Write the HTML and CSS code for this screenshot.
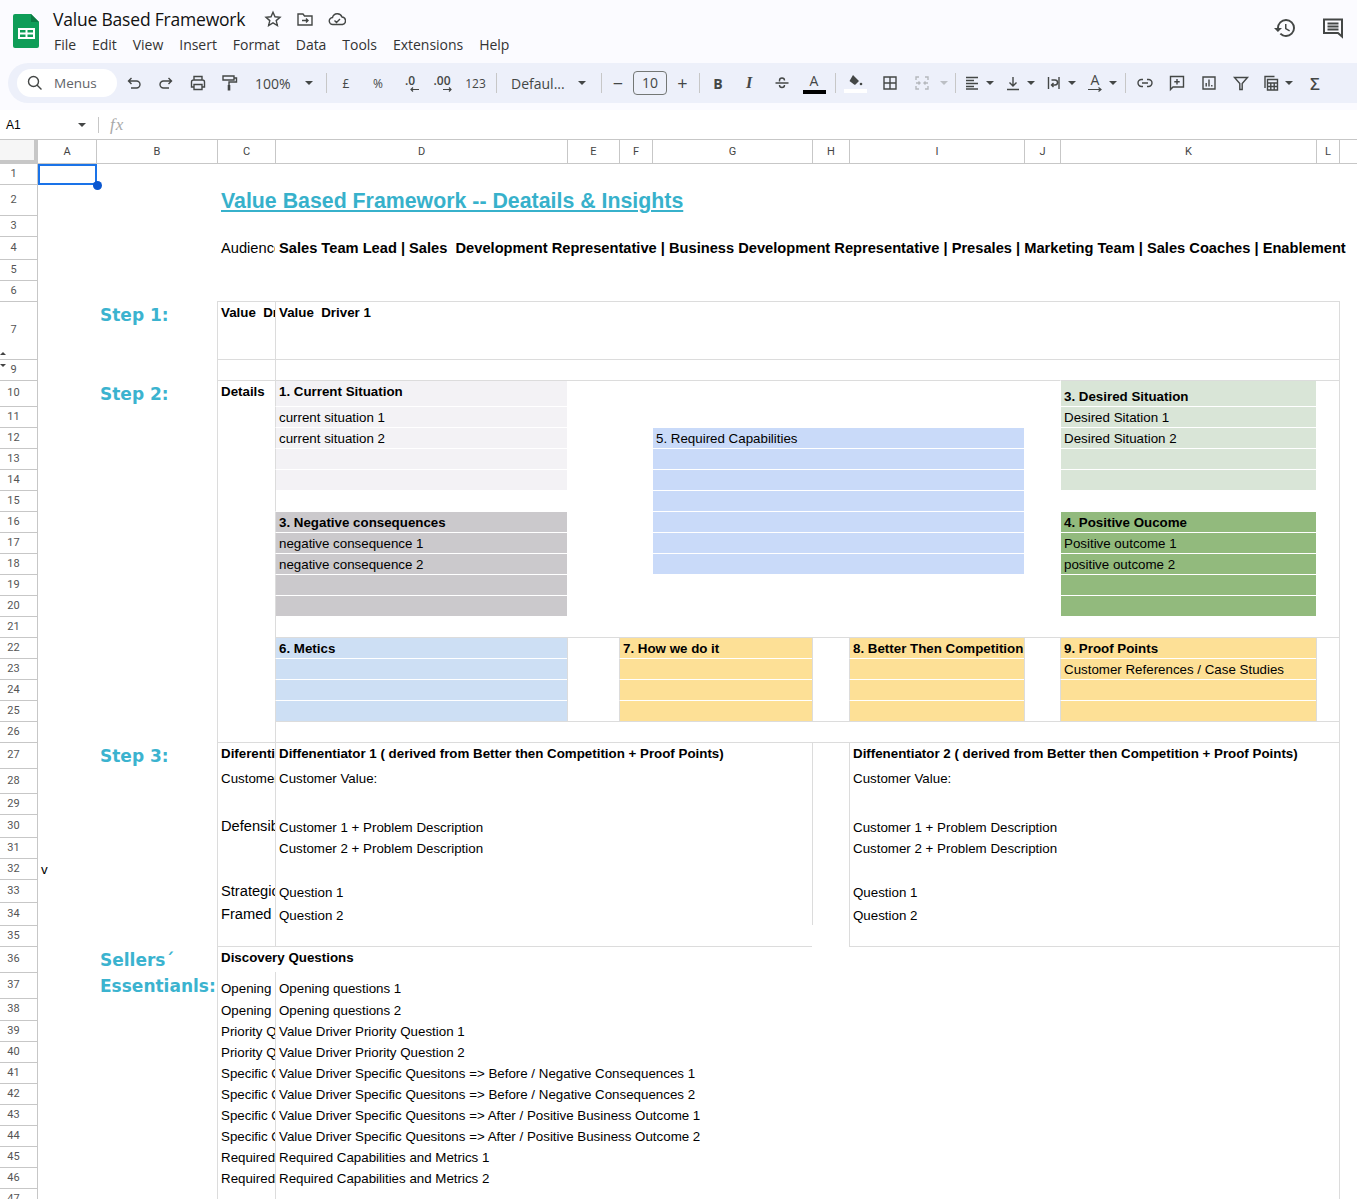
FILE: index.html
```html
<!DOCTYPE html>
<html lang="en">
<head>
<meta charset="utf-8">
<title>Value Based Framework</title>
<link rel="stylesheet" href="styles.css">
</head>
<body>
<div class="app">
  <header class="topbar">
    <svg class="logo" viewBox="0 0 26 34"><path d="M2 0h16l8 8v24a2 2 0 0 1-2 2H2a2 2 0 0 1-2-2V2a2 2 0 0 1 2-2z" fill="#0f9d58"/><path d="M18 0l8 8h-8z" fill="#0b7a43"/><path d="M5 14h17v11H5zM7 16v2.500h5.500V16zM14.500 16v2.500H20V16zM7 20.500V23h5.500v-2.500zM14.500 20.500V23H20v-2.500z" fill="#fff" fill-rule="evenodd"/></svg>
    <div class="doc">
      <div class="title-line">
        <span class="doc-title">Value Based Framework</span>
        <svg class="ic ic-star" viewBox="0 0 18 18"><path d="M9 2.200l2 4.600 5 .5-3.800 3.300 1.200 4.900L9 12.900l-4.400 2.600 1.200-4.900L2 7.300l5-.5z"/></svg>
        <svg class="ic ic-gap" viewBox="0 0 18 18"><path d="M2 4h5l1.500 2H16v9H2zM6 10.500h6M10 8.500l2 2-2 2"/></svg>
        <svg class="ic ic-gap" viewBox="0 0 18 18"><path d="M5 14.500a3.500 3.500 0 0 1-.5-7A5 5 0 0 1 14 7a3.800 3.800 0 0 1 .5 7.500zM6.500 10.500l2 2 3.500-3.500"/></svg>
      </div>
      <nav class="menu">
        <span>File</span><span>Edit</span><span>View</span><span>Insert</span><span>Format</span><span>Data</span><span>Tools</span><span>Extensions</span><span>Help</span>
      </nav>
    </div>
    <div class="top-right">
      <svg class="ic-big" viewBox="0 0 24 24"><path class="fill" d="M13 3a9 9 0 0 0-9 9H1l3.890 3.890.07.14L9 12H6c0-3.870 3.130-7 7-7s7 3.130 7 7-3.130 7-7 7c-1.930 0-3.680-.79-4.940-2.060l-1.420 1.420A8.954 8.954 0 0 0 13 21a9 9 0 0 0 0-18zm-1 5v5l4.280 2.540.72-1.210-3.500-2.080V8H12z"/></svg>
      <svg class="ic-big" viewBox="0 0 24 24"><path class="line" d="M3 3.500h18v17l-4-3.500H3zM6.500 7.500h11M6.500 10.500h11M6.500 13.500h11"/></svg>
    </div>
  </header>

  <div class="toolbar-wrap">
    <div class="toolbar">
      <div class="search">
        <svg class="ic ic-search" viewBox="0 0 18 18"><path d="M7.500 2.500a5 5 0 1 1 0 10 5 5 0 0 1 0-10zM11.200 11.200l4.300 4.300"/></svg>
        <span>Menus</span>
      </div>
      <div class="btn first-btn"><svg class="ic" viewBox="0 0 18 18"><path d="M4 7h7.500a3.500 3.500 0 0 1 0 7H6M6.500 4l-3 3 3 3"/></svg></div>
      <div class="btn"><svg class="ic" viewBox="0 0 18 18"><path d="M14 7H6.500a3.500 3.500 0 0 0 0 7H12M11.500 4l3 3-3 3"/></svg></div>
      <div class="btn"><svg class="ic" viewBox="0 0 18 18"><path d="M5 6V2.500h8V6M5 13H2.500V8A2 2 0 0 1 4.500 6h9a2 2 0 0 1 2 2v5H13M5 10.500h8v5H5z"/></svg></div>
      <div class="btn paint"><svg class="ic" viewBox="0 0 18 18"><path d="M3 2h11v4H3zM14 4h2.500v4H9v3"/><path class="solid" d="M7.700 11h2.600v5.500H7.700z"/></svg></div>
      <div class="zoom"><span>100%</span><i class="caret"></i></div>
      <i class="sep"></i>
      <div class="btn tx">£</div>
      <div class="btn tx">%</div>
      <div class="btn stack"><span>.0</span><svg viewBox="0 0 12 5"><path d="M10 2.500H2M4 .5l-2 2 2 2"/></svg></div>
      <div class="btn stack"><span>.00</span><svg viewBox="0 0 12 5"><path d="M2 2.500h8M8 .5l2 2-2 2"/></svg></div>
      <div class="btn tx w35">123</div>
      <i class="sep"></i>
      <div class="font"><span>Defaul...</span><i class="caret"></i></div>
      <i class="sep"></i>
      <div class="btn w26 sym">−</div>
      <div class="size">10</div>
      <div class="btn w27 sym plus">+</div>
      <i class="sep"></i>
      <div class="btn bold back">B</div>
      <div class="btn ital">I</div>
      <div class="btn"><svg class="ic" viewBox="0 0 18 18"><path d="M2.500 9h13M6.500 7.500V6.500A2.500 2.500 0 0 1 11.500 6.500M6.500 11A2.500 2.500 0 0 0 11.500 11"/></svg></div>
      <div class="btn colour"><span>A</span><i class="bar black"></i></div>
      <i class="sep sep-gap"></i>
      <div class="btn colour"><svg class="ic ic-fill" viewBox="0 0 18 14"><path class="solid" d="M7 1l6 6-3.500 3.500a1 1 0 0 1-1.400 0L3.500 6.900z"/><circle class="solid" cx="15" cy="10" r="1.300"/></svg><i class="bar white"></i></div>
      <div class="btn ml3"><svg class="ic" viewBox="0 0 18 18"><path d="M3 3h12v12H3zM9 3v12M3 9h12"/></svg></div>
      <div class="btn"><svg class="ic ic-off" viewBox="0 0 18 18"><path d="M3 6V3h3M15 6V3h-3M3 12v3h3M15 12v3h-3M3 9h4M5.500 7.500L7 9l-1.500 1.500M15 9h-4M12.500 7.500L11 9l1.500 1.500"/></svg></div>
      <i class="caret off merge-caret"></i>
      <i class="sep"></i>
      <div class="grp"><div class="btn w26"><svg class="ic" viewBox="0 0 18 18"><path d="M3 3.500h12M3 6.500h8M3 9.500h12M3 12.500h8M3 15h12"/></svg></div><i class="caret"></i></div>
      <div class="grp"><div class="btn w26"><svg class="ic" viewBox="0 0 18 18"><path d="M9 3v9M5.500 8.500L9 12l3.500-3.500M3 15.500h12"/></svg></div><i class="caret"></i></div>
      <div class="grp"><div class="btn w26"><svg class="ic" viewBox="0 0 18 18"><path d="M3.500 3v12M14 3v12M6.500 6h3.500a2.500 2.500 0 0 1 0 5H6.500M8.500 9l-2 2 2 2"/></svg></div><i class="caret"></i></div>
      <div class="grp grp-last"><div class="btn w26 rot"><span>A</span><svg viewBox="0 0 16 6"><path d="M1 2.500h13M11.500 .5l2.500 2-2.500 2"/></svg></div><i class="caret"></i></div>
      <i class="sep"></i>
      <div class="btn"><svg class="ic" viewBox="0 0 18 18"><path d="M7 5.500H5.500a3.500 3.500 0 0 0 0 7H7M11 5.500h1.500a3.500 3.500 0 0 1 0 7H11M6 9h6"/></svg></div>
      <div class="btn"><svg class="ic" viewBox="0 0 18 18"><path d="M2.500 2.500h13v10.500H5L2.500 15.500zM9 5v5.500M6.300 7.700h5.400"/></svg></div>
      <div class="btn"><svg class="ic" viewBox="0 0 18 18"><path d="M3 3h12v12H3zM6.200 12.500V9M9 12.500V5.500M11.800 12.500V11"/></svg></div>
      <div class="btn"><svg class="ic" viewBox="0 0 18 18"><path d="M2.500 3.500h13L10.200 9.500v6H7.800v-6z"/></svg></div>
      <div class="grp grp-fn"><div class="btn w26"><svg class="ic" viewBox="0 0 18 18"><path d="M3 14V2.500h9.500M5.500 5.500h10v10.500h-10zM5.500 9h10M5.500 12.500h10M8.800 9v7M12.200 9v7"/></svg></div><i class="caret"></i></div>
      <div class="btn sigma">Σ</div>
    </div>
  </div>

  <div class="formula">
    <span class="ref">A1</span><i class="caret"></i><i class="sep"></i><span class="fx">fx</span>
  </div>

  <main class="sheet">
    <div class="row head">
      <div class="corner"></div><div>A</div><div>B</div><div>C</div><div>D</div><div>E</div><div>F</div><div>G</div><div>H</div><div>I</div><div>J</div><div>K</div><div>L</div><div></div>
    </div>
    <div class="row h20"><div class="rn first">1</div><div class="cell a"><i class="sel"><i class="handle"></i></i></div></div>
    <div class="row h31"><div class="rn">2</div><div class="cell c over title">Value Based Framework -- Deatails &amp; Insights</div></div>
    <div class="row"><div class="rn">3</div></div>
    <div class="row h23"><div class="rn">4</div><div class="cell c big">Audience</div><div class="cell d over aud">Sales Team Lead | Sales  Development Representative | Business Development Representative | Presales | Marketing Team | Sales Coaches | Enablement</div></div>
    <div class="row"><div class="rn">5</div></div>
    <div class="row"><div class="rn">6</div></div>
    <div class="row h58"><div class="rn rn-up">7</div><div class="cell b step stepm">Step 1:</div><div class="cell c l t top b7">Value  Driver</div><div class="cell dl l t top b7">Value  Driver 1</div><div class="cell m l"></div></div>
    <div class="row"><div class="rn rn-down">9</div><div class="cell c l t"></div><div class="cell dl l t"></div><div class="cell m l"></div></div>
    <div class="row h26"><div class="rn">10</div><div class="cell b step">Step 2:</div><div class="cell c l t top b7">Details</div><div class="cell d l t top b7 grey1">1. Current Situation</div><div class="cell ej t"></div><div class="cell k t b7 green1 kpad">3. Desired Situation</div><div class="cell lc t"></div><div class="cell m l"></div></div>
    <div class="row"><div class="rn">11</div><div class="cell c l"></div><div class="cell d w l grey1">current situation 1</div><div class="cell k w green1">Desired Sitation 1</div><div class="cell m l"></div></div>
    <div class="row"><div class="rn">12</div><div class="cell c l"></div><div class="cell d w l grey1">current situation 2</div><div class="cell gi w blue1">5. Required Capabilities</div><div class="cell k w green1">Desired Situation 2</div><div class="cell m l"></div></div>
    <div class="row"><div class="rn">13</div><div class="cell c l"></div><div class="cell d w l grey1"></div><div class="cell gi w blue1"></div><div class="cell k w green1"></div><div class="cell m l"></div></div>
    <div class="row"><div class="rn">14</div><div class="cell c l"></div><div class="cell d w l grey1"></div><div class="cell gi w blue1"></div><div class="cell k w green1"></div><div class="cell m l"></div></div>
    <div class="row"><div class="rn">15</div><div class="cell c l"></div><div class="cell d l"></div><div class="cell gi w blue1"></div><div class="cell m l"></div></div>
    <div class="row"><div class="rn">16</div><div class="cell c l"></div><div class="cell d w l b7 grey2">3. Negative consequences</div><div class="cell gi w blue1"></div><div class="cell k w b7 green2">4. Positive Oucome</div><div class="cell m l"></div></div>
    <div class="row"><div class="rn">17</div><div class="cell c l"></div><div class="cell d w l grey2">negative consequence 1</div><div class="cell gi w blue1"></div><div class="cell k w green2">Positive outcome 1</div><div class="cell m l"></div></div>
    <div class="row"><div class="rn">18</div><div class="cell c l"></div><div class="cell d w l grey2">negative consequence 2</div><div class="cell gi w blue1"></div><div class="cell k w green2">positive outcome 2</div><div class="cell m l"></div></div>
    <div class="row"><div class="rn">19</div><div class="cell c l"></div><div class="cell d w l grey2"></div><div class="cell k w green2"></div><div class="cell m l"></div></div>
    <div class="row"><div class="rn">20</div><div class="cell c l"></div><div class="cell d w l grey2"></div><div class="cell k w green2"></div><div class="cell m l"></div></div>
    <div class="row"><div class="rn">21</div><div class="cell c l"></div><div class="cell d l"></div><div class="cell m l"></div></div>
    <div class="row"><div class="rn">22</div><div class="cell c l"></div><div class="cell d l t b7 blue2">6. Metics</div><div class="cell e l t"></div><div class="cell fg l t b7 yellow">7. How we do it</div><div class="cell h l t"></div><div class="cell i l t b7 yellow">8. Better Then Competition</div><div class="cell j l t"></div><div class="cell k l t b7 yellow">9. Proof Points</div><div class="cell lc l t"></div><div class="cell m l"></div></div>
    <div class="row"><div class="rn">23</div><div class="cell c l"></div><div class="cell d w l blue2"></div><div class="cell e l"></div><div class="cell fg w l yellow"></div><div class="cell h l"></div><div class="cell i w l yellow"></div><div class="cell j l"></div><div class="cell k w l yellow">Customer References / Case Studies</div><div class="cell lc l"></div><div class="cell m l"></div></div>
    <div class="row"><div class="rn">24</div><div class="cell c l"></div><div class="cell d w l blue2"></div><div class="cell e l"></div><div class="cell fg w l yellow"></div><div class="cell h l"></div><div class="cell i w l yellow"></div><div class="cell j l"></div><div class="cell k w l yellow"></div><div class="cell lc l"></div><div class="cell m l"></div></div>
    <div class="row"><div class="rn">25</div><div class="cell c l"></div><div class="cell d w l blue2"></div><div class="cell e l"></div><div class="cell fg w l yellow"></div><div class="cell h l"></div><div class="cell i w l yellow"></div><div class="cell j l"></div><div class="cell k w l yellow"></div><div class="cell lc l"></div><div class="cell m l"></div></div>
    <div class="row"><div class="rn">26</div><div class="cell c l"></div><div class="cell dl l t"></div><div class="cell m l"></div></div>
    <div class="row h26"><div class="rn">27</div><div class="cell b step">Step 3:</div><div class="cell c l t top b7">Diferentiators</div><div class="cell dg l t top b7">Diffenentiator 1 ( derived from Better then Competition + Proof Points)</div><div class="cell h l t"></div><div class="cell il l t top b7">Diffenentiator 2 ( derived from Better then Competition + Proof Points)</div><div class="cell m l"></div></div>
    <div class="row h25"><div class="rn">28</div><div class="cell c l top">Customer Value</div><div class="cell dg l top">Customer Value:</div><div class="cell h l"></div><div class="cell il l top">Customer Value:</div><div class="cell m l"></div></div>
    <div class="row"><div class="rn">29</div><div class="cell c l"></div><div class="cell dg l"></div><div class="cell h l"></div><div class="cell il l"></div><div class="cell m l"></div></div>
    <div class="row h23"><div class="rn">30</div><div class="cell c l big">Defensible</div><div class="cell dg l">Customer 1 + Problem Description</div><div class="cell h l"></div><div class="cell il l">Customer 1 + Problem Description</div><div class="cell m l"></div></div>
    <div class="row"><div class="rn">31</div><div class="cell c l"></div><div class="cell dg l">Customer 2 + Problem Description</div><div class="cell h l"></div><div class="cell il l">Customer 2 + Problem Description</div><div class="cell m l"></div></div>
    <div class="row"><div class="rn">32</div><div class="cell a vee">v</div><div class="cell c l"></div><div class="cell dg l"></div><div class="cell h l"></div><div class="cell il l"></div><div class="cell m l"></div></div>
    <div class="row h23"><div class="rn">33</div><div class="cell c l big">Strategic</div><div class="cell dg l">Question 1</div><div class="cell h l"></div><div class="cell il l">Question 1</div><div class="cell m l"></div></div>
    <div class="row h23"><div class="rn">34</div><div class="cell c l big">Framed</div><div class="cell dg l">Question 2</div><div class="cell h l"></div><div class="cell il l">Question 2</div><div class="cell m l"></div></div>
    <div class="row"><div class="rn">35</div><div class="cell c l"></div><div class="cell dg l"></div><div class="cell il l"></div><div class="cell m l"></div></div>
    <div class="row h26"><div class="rn">36</div><div class="cell b step">Sellers´</div><div class="cell cg l t top b7">Discovery Questions</div><div class="cell il t"></div><div class="cell m l"></div></div>
    <div class="row h26"><div class="rn">37</div><div class="cell b step">Essentianls:</div><div class="cell c l">Opening questions</div><div class="cell d l">Opening questions 1</div><div class="cell m l"></div></div>
    <div class="row h22"><div class="rn">38</div><div class="cell c l">Opening questions</div><div class="cell d l">Opening questions 2</div><div class="cell m l"></div></div>
    <div class="row"><div class="rn">39</div><div class="cell c l">Priority Questions</div><div class="cell d l">Value Driver Priority Question 1</div><div class="cell m l"></div></div>
    <div class="row"><div class="rn">40</div><div class="cell c l">Priority Questions</div><div class="cell d l">Value Driver Priority Question 2</div><div class="cell m l"></div></div>
    <div class="row"><div class="rn">41</div><div class="cell c l">Specific Questions</div><div class="cell dl l">Value Driver Specific Quesitons =&gt; Before / Negative Consequences 1</div><div class="cell m l"></div></div>
    <div class="row"><div class="rn">42</div><div class="cell c l">Specific Questions</div><div class="cell dl l">Value Driver Specific Quesitons =&gt; Before / Negative Consequences 2</div><div class="cell m l"></div></div>
    <div class="row"><div class="rn">43</div><div class="cell c l">Specific Questions</div><div class="cell dl l">Value Driver Specific Quesitons =&gt; After / Positive Business Outcome 1</div><div class="cell m l"></div></div>
    <div class="row"><div class="rn">44</div><div class="cell c l">Specific Questions</div><div class="cell dl l">Value Driver Specific Quesitons =&gt; After / Positive Business Outcome 2</div><div class="cell m l"></div></div>
    <div class="row"><div class="rn">45</div><div class="cell c l">Required Capabilities</div><div class="cell dl l">Required Capabilities and Metrics 1</div><div class="cell m l"></div></div>
    <div class="row"><div class="rn">46</div><div class="cell c l">Required Capabilities</div><div class="cell dl l">Required Capabilities and Metrics 2</div><div class="cell m l"></div></div>
    <div class="row"><div class="rn">47</div><div class="cell c l"></div><div class="cell dl l"></div><div class="cell m l"></div></div>
  </main>
</div>
</body>
</html>
```
FILE: styles.css
```css
* { box-sizing: border-box; }
html, body { margin: 0; padding: 0; background: #fff; }
i { font-style: normal; display: block; }
.app { width: 1357px; height: 1199px; overflow: hidden; display: flex; flex-direction: column; font-family: "Liberation Sans", Arial, sans-serif; color: #000; }

/* title bar */
.topbar { height: 63px; background: #fbfbff; display: flex; position: relative; flex: none; }
.logo { width: 26px; height: 34px; margin: 14px 0 0 13px; flex: none; }
.doc { margin-left: 14px; padding-top: 7px; }
.title-line { display: flex; align-items: center; height: 24px; }
.doc-title { font: 17.5px/24px "Open Sans", sans-serif; color: #111; letter-spacing: -0.2px; }
.ic { width: 18px; height: 18px; fill: none; stroke: #444746; stroke-width: 1.4; flex: none; }
.ic .solid { fill: #444746; stroke: none; }
.ic-star { margin-left: 19px; }
.ic-gap { margin-left: 14px; }
.menu { display: flex; gap: 16px; margin-top: 2px; font: 14px/24px "Open Sans", sans-serif; color: #333; margin-left: 1px; letter-spacing: -0.03px; }
.top-right { margin-left: auto; display: flex; gap: 24px; padding: 16px 12px 0 0; }
.ic-big { width: 24px; height: 24px; }
.ic-big .fill { fill: #444746; }
.ic-big .line { fill: none; stroke: #444746; stroke-width: 2; }

/* toolbar */
.toolbar-wrap { background: #fbfbff; padding: 0 0 7px 8px; flex: none; }
.toolbar { height: 40px; background: #edf0fa; border-radius: 20px 0 0 20px; display: flex; align-items: center; font-family: "Open Sans", sans-serif; color: #444746; }
.search { width: 100px; height: 28px; margin-left: 9px; border-radius: 14px; background: #fff; display: flex; align-items: center; gap: 10px; padding-left: 9px; font-size: 13.5px; color: #5f6368; flex: none; }
.btn { width: 32px; height: 28px; display: flex; align-items: center; justify-content: center; flex: none; }
.first-btn { margin-left: 1px; }
.paint { margin-left: -1px; margin-right: 1px; }
.tx { font-size: 12px; }
.w35 { width: 35px; }
.w26 { width: 26px; }
.w27 { width: 27px; }
.ml3 { margin-left: 3px; }
.zoom { width: 77px; padding: 0 10px 0 9px; display: flex; align-items: center; justify-content: space-between; font-size: 14px; flex: none; }
.font { width: 98px; padding: 0 12px 0 11px; display: flex; align-items: center; justify-content: space-between; font-size: 14px; flex: none; }
.caret { width: 0; height: 0; border-left: 4px solid transparent; border-right: 4px solid transparent; border-top: 4px solid #444746; flex: none; }
.caret.off { border-top-color: #bcbfc4; }
.sep { width: 1px; height: 20px; background: #c7c7c7; margin: 0 3px; flex: none; }
.sep-gap { margin-left: 5px; }
.stack { flex-direction: column; font-size: 12px; font-weight: 600; line-height: 12px; }
.stack svg { width: 12px; height: 5px; margin-left: 9px; fill: none; stroke: #444746; stroke-width: 1.2; }
.size { width: 34px; height: 24px; margin-left: 2px; border: 1px solid #747775; border-radius: 4px; font-size: 14px; line-height: 22px; text-align: center; flex: none; }
.plus { margin-left: 2px; }
.sym { font-size: 18px; }
.bold { font-weight: 700; font-size: 14px; }
.back { margin-left: -1px; }
.ital { font: italic 700 16px "Liberation Serif", serif; margin-left: -1px; margin-right: 1px; }
.colour { flex-direction: column; font-size: 14px; line-height: 16px; }
.bar { width: 23px; height: 4px; margin-top: 1px; }
.black { background: #000; }
.white { background: #fff; }
.ic-fill { height: 14px; }
.ic-off { stroke: #b5b8bd; }
.merge-caret { margin: 0 4px 0 2px; }
.grp { display: flex; align-items: center; width: 36px; margin-right: 5px; flex: none; }
.grp .caret { margin-left: 1px; }
.grp-last { margin-right: 4px; }
.grp-fn { margin-left: 1px; }
.rot { flex-direction: column; font-size: 14px; line-height: 14px; }
.rot svg { width: 16px; height: 6px; fill: none; stroke: #444746; stroke-width: 1.2; }
.sigma { margin-left: 0; font-size: 17px; font-weight: 600; }

/* formula bar */
.formula { height: 29px; display: flex; align-items: center; padding-left: 6px; font-size: 12px; flex: none; }
.formula .ref { width: 72px; }
.formula .caret { margin-right: 12px; }
.formula .sep { height: 16px; margin: 0 11px 0 0; }
.fx { font: italic 17px "Liberation Serif", serif; color: #a8a8a8; letter-spacing: 1px; }

/* sheet */
.sheet { flex: 1; overflow: hidden; }
.row { display: grid; grid-template-columns: 38px 58px 121px 58px 292px 52px 33px 160px 37px 175px 36px 256px 23px 18px; grid-template-rows: 100%; height: 21px; font-size: 13.33px; }
.h20 { height: 20px; }
.h22 { height: 22px; }
.h23 { height: 23px; }
.h25 { height: 25px; }
.h26 { height: 26px; }
.h31 { height: 31px; }
.h58 { height: 58px; }
.head { height: 25px; border-top: 1px solid #c7c7c7; border-bottom: 1px solid #c7c7c7; font: 11px/23px "Roboto", sans-serif; color: #444; text-align: center; }
.head > div { border-left: 1px solid #c7c7c7; }
.head > .corner { border-left: 0; background: #f6f6f6; border-right: 4px solid #c7c7c7; border-bottom: 3px solid #c7c7c7; }
.head > div:nth-child(2) { border-left: 0; }
.rn { grid-column: 1; border-top: 1px solid #c7c7c7; border-right: 1px solid #c7c7c7; font: 11px "Roboto", sans-serif; color: #555; display: flex; align-items: center; justify-content: center; padding-right: 10px; padding-bottom: 2px; position: relative; }
.rn.first { border-top: 0; }
.rn-up::after { content: ""; position: absolute; left: 0; bottom: 4px; border-left: 3px solid transparent; border-right: 3px solid transparent; border-bottom: 3px solid #444; }
.rn-down::after { content: ""; position: absolute; left: 0; top: 4px; border-left: 3px solid transparent; border-right: 3px solid transparent; border-top: 3px solid #444; }

.cell { display: flex; align-items: flex-end; padding: 0 3px 1px 4px; line-height: 16px; white-space: pre; min-width: 0; position: relative; }
.a { grid-column: 2; }
.b { grid-column: 3; }
.c { grid-column: 4; overflow: hidden; }
.d { grid-column: 5; }
.e { grid-column: 6; }
.h { grid-column: 9; }
.i { grid-column: 10; }
.j { grid-column: 11; }
.k { grid-column: 12; }
.lc { grid-column: 13; }
.m { grid-column: 14; }
.dl { grid-column: 5 / 14; }
.dg { grid-column: 5 / 9; }
.il { grid-column: 10 / 14; }
.fg { grid-column: 7 / 9; }
.gi { grid-column: 8 / 11; }
.ej { grid-column: 6 / 12; }
.cg { grid-column: 4 / 9; }
.over { overflow: visible; }
.w { border-top: 1px solid #fff; border-left: 1px solid #fff; padding-left: 3px; }
.kpad { border-left: 1px solid #fff; padding-left: 3px; }
.l { border-left: 1px solid #dcdcdc; padding-left: 3px; }
.t { border-top: 1px solid #dcdcdc; }
.top { align-items: flex-start; padding-top: 3px; }
.b7 { font-weight: 700; }
.big { font-size: 14.67px; padding-bottom: 3px; }
.vee { padding-bottom: 1px; padding-left: 3px; }
.grey1 { background: #f3f2f5; }
.grey2 { background: #cbc9cc; }
.green1 { background: #d9e5d7; }
.green2 { background: #92ba7d; }
.blue1 { background: #c9daf9; }
.blue2 { background: #cddff4; }
.yellow { background: #fde096; }
.title { font-size: 21.33px; font-weight: 700; color: #37b1cb; text-decoration: underline; padding-bottom: 2px; line-height: 24px; }
.aud { font-size: 14.67px; font-weight: 700; padding-bottom: 3px; }
.step { font: 700 17px/22px "DejaVu Sans", sans-serif; color: #3bb3cf; padding: 2px 0 0 4px; align-items: center; overflow: visible; }
.stepm { align-items: flex-start; padding-top: 3px; }
.sel { position: absolute; left: 0; top: 0; right: -1px; bottom: -1px; border: 2px solid #1a73e8; }
.handle { position: absolute; right: -7px; bottom: -7px; width: 9px; height: 9px; border-radius: 50%; background: #0b57d0; }
```
